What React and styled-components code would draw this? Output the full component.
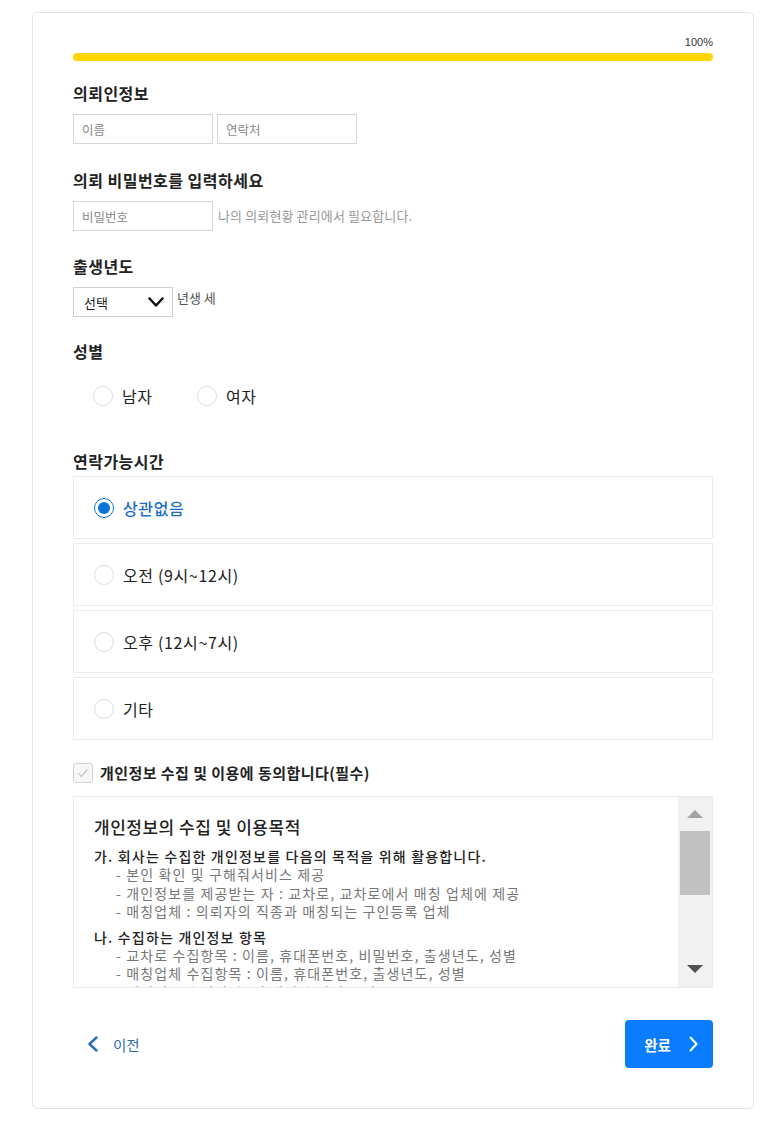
import React from "react";
import styled, { createGlobalStyle } from "styled-components";

const GlobalStyle = createGlobalStyle`
  body {
    margin: 0;
    background: #fff;
    font-family: "Noto Sans CJK KR", "Noto Sans", sans-serif;
    color: #222;
  }
`;

const Card = styled.div`
  box-sizing: border-box;
  width: 722px;
  margin: 12px 0 13px 32px;
  padding: 22px 40px 40px;
  border: 1px solid #e6e6e6;
  border-radius: 5px;
  background: #fff;
`;

const ProgressLabel = styled.div`
  text-align: right;
  font-family: "Liberation Sans", Arial, sans-serif;
  font-size: 11px;
  line-height: 14px;
  color: #333;
`;

const ProgressBar = styled.div`
  height: 8px;
  margin-top: 4px;
  border-radius: 4px;
  background: #ffd500;
`;

const Section = styled.section`
  margin-top: ${(p) => p.$top || 0}px;
`;

const SectionTitle = styled.h3`
  margin: 0 0 ${(p) => (p.$gap !== undefined ? p.$gap : 11)}px;
  font-size: 16px;
  line-height: 20px;
  letter-spacing: 0.03em;
  font-weight: 600;
  color: #222;
`;

const InputRow = styled.div`
  display: flex;
  align-items: ${(p) => p.$align || "center"};
  gap: 4px;
`;

const TextInput = styled.input`
  box-sizing: border-box;
  width: 140px;
  height: 30px;
  padding: 0 8px;
  border: 1px solid #d6d6d6;
  border-radius: 0;
  font-family: inherit;
  font-size: 12.5px;
  color: #222;
  outline: none;

  &::placeholder {
    color: #8a8a8a;
  }
`;

const Helper = styled.span`
  margin-left: 1px;
  font-size: 13px;
  line-height: 16px;
  letter-spacing: 0.01em;
  color: #999;
`;

const SelectBox = styled.div`
  box-sizing: border-box;
  width: 100px;
  height: 30px;
  display: flex;
  align-items: center;
  justify-content: space-between;
  padding: 0 8px 0 10px;
  border: 1px solid #d0d0d0;
  font-size: 13px;
  color: #222;
`;

const SelectSuffix = styled.span`
  padding-top: 3px;
  font-size: 13px;
  line-height: 16px;
  color: #555;
`;

const GenderRow = styled.div`
  display: flex;
  align-items: center;
  padding-left: 20px;
`;

const GenderOption = styled.label`
  width: 104px;
  display: flex;
  align-items: center;
  gap: 9px;
  font-size: 16px;
  line-height: 20px;
  letter-spacing: 0.04em;
  color: #222;
`;

const Radio = styled.span`
  box-sizing: border-box;
  width: 20px;
  height: 20px;
  flex: none;
  display: grid;
  place-items: center;
  border-radius: 50%;
  border: ${(p) => (p.$checked ? "1.5px solid #0a74da" : "1px solid #dcdcdc")};
  background: #fff;

  &::after {
    content: "";
    display: ${(p) => (p.$checked ? "block" : "none")};
    width: 12px;
    height: 12px;
    border-radius: 50%;
    background: #0a74da;
  }
`;

const OptionList = styled.div`
  display: flex;
  flex-direction: column;
  gap: 4px;
`;

const TimeOption = styled.label`
  box-sizing: border-box;
  height: 63px;
  display: flex;
  align-items: center;
  gap: 9px;
  padding-left: 20px;
  border: 1px solid #ebebeb;
  font-size: 16px;
  line-height: 20px;
  letter-spacing: 0.04em;
  font-weight: ${(p) => (p.$checked ? 500 : 400)};
  color: ${(p) => (p.$checked ? "#1a6ec7" : "#222")};
`;

const AgreeRow = styled.label`
  margin-top: 23px;
  display: flex;
  align-items: center;
  gap: 7px;
  font-size: 15px;
  line-height: 20px;
  letter-spacing: 0.03em;
  font-weight: 600;
  color: #222;
`;

const CheckBox = styled.span`
  box-sizing: border-box;
  width: 20px;
  height: 20px;
  display: grid;
  place-items: center;
  border: 1px solid #d4d4d4;
  border-radius: 3px;
  background: #f7f7f7;
`;

const TermsBox = styled.div`
  margin-top: 13px;
  height: 192px;
  display: flex;
  border: 1px solid #ebebeb;
  box-sizing: border-box;
`;

const TermsContent = styled.div`
  flex: 1;
  overflow: hidden;
  padding: 20px 20px 0;
`;

const TermsTitle = styled.h4`
  margin: 0 0 10px;
  font-size: 17px;
  line-height: 20px;
  letter-spacing: 0.03em;
  font-weight: 500;
  color: #222;
`;

const TermsHeading = styled.p`
  margin: ${(p) => (p.$first ? 0 : "7px")} 0 0;
  font-size: 14px;
  line-height: 18px;
  letter-spacing: 0.085em;
  font-weight: 500;
  color: #222;
`;

const TermsList = styled.ul`
  margin: 0;
  padding: 0 0 0 22px;
  list-style: none;

  li {
    font-size: 14px;
    line-height: 18.5px;
    letter-spacing: 0.08em;
    color: #777;
    white-space: nowrap;
  }
`;

const ScrollTrack = styled.div`
  width: 34px;
  flex: none;
  display: flex;
  flex-direction: column;
  align-items: center;
  background: #f1f1f1;
`;

const ScrollArrow = styled.span`
  width: 0;
  height: 0;
  margin: ${(p) => (p.$down ? "auto 0 14px" : "13px 0 0")};
  border-left: 8px solid transparent;
  border-right: 8px solid transparent;
  ${(p) =>
    p.$down
      ? "border-top: 8px solid #505050;"
      : "border-bottom: 8px solid #a3a3a3;"}
`;

const ScrollThumb = styled.div`
  width: 30px;
  height: 64px;
  margin-top: 13px;
  background: #c1c1c1;
`;

const Footer = styled.div`
  margin-top: 32px;
  display: flex;
  align-items: center;
  justify-content: space-between;
`;

const PrevLink = styled.a`
  display: flex;
  align-items: center;
  gap: 15px;
  padding-left: 15px;
  font-size: 14.5px;
  color: #2a6db5;
  text-decoration: none;
  cursor: pointer;
`;

const NextButton = styled.button`
  width: 88px;
  height: 48px;
  display: flex;
  align-items: center;
  justify-content: center;
  gap: 18px;
  padding: 0 0 0 4px;
  border: none;
  border-radius: 4px;
  background: #0a7cff;
  color: #fff;
  font-family: inherit;
  font-size: 14.5px;
  font-weight: 600;
  cursor: pointer;
`;

const Chevron = ({ dir = "down", color = "#111", w = 16, h = 10, stroke = 2.5 }) => {
  const d =
    dir === "down"
      ? `M1.5 1.5 L${w / 2} ${h - 1.5} L${w - 1.5} 1.5`
      : dir === "left"
      ? `M${w - 1.5} 1.5 L1.5 ${h / 2} L${w - 1.5} ${h - 1.5}`
      : `M1.5 1.5 L${w - 1.5} ${h / 2} L1.5 ${h - 1.5}`;
  return (
    <svg width={w} height={h} viewBox={`0 0 ${w} ${h}`}>
      <path d={d} fill="none" stroke={color} strokeWidth={stroke} strokeLinecap="round" strokeLinejoin="round" />
    </svg>
  );
};

const times = [
  { label: "상관없음", checked: true },
  { label: "오전 (9시~12시)" },
  { label: "오후 (12시~7시)" },
  { label: "기타" },
];

export default function App() {
  return (
    <>
      <GlobalStyle />
      <Card>
        <ProgressLabel>100%</ProgressLabel>
        <ProgressBar />

        <Section $top={22}>
          <SectionTitle>의뢰인정보</SectionTitle>
          <InputRow>
            <TextInput placeholder="이름" />
            <TextInput placeholder="연락처" />
          </InputRow>
        </Section>

        <Section $top={26}>
          <SectionTitle>의뢰 비밀번호를 입력하세요</SectionTitle>
          <InputRow>
            <TextInput type="password" placeholder="비밀번호" />
            <Helper>나의 의뢰현황 관리에서 필요합니다.</Helper>
          </InputRow>
        </Section>

        <Section $top={25}>
          <SectionTitle>출생년도</SectionTitle>
          <InputRow $align="flex-start">
            <SelectBox>
              선택
              <Chevron dir="down" />
            </SelectBox>
            <SelectSuffix>년생 세</SelectSuffix>
          </InputRow>
        </Section>

        <Section $top={24}>
          <SectionTitle $gap={25}>성별</SectionTitle>
          <GenderRow>
            <GenderOption>
              <Radio />
              남자
            </GenderOption>
            <GenderOption>
              <Radio />
              여자
            </GenderOption>
          </GenderRow>
        </Section>

        <Section $top={45}>
          <SectionTitle $gap={5}>연락가능시간</SectionTitle>
          <OptionList>
            {times.map((t) => (
              <TimeOption key={t.label} $checked={t.checked}>
                <Radio $checked={t.checked} />
                {t.label}
              </TimeOption>
            ))}
          </OptionList>
        </Section>

        <AgreeRow>
          <CheckBox>
            <svg width="12" height="10" viewBox="0 0 12 10">
              <path d="M1.5 5.5 L4.5 8.5 L10.5 1.5" fill="none" stroke="#c9c9c9" strokeWidth="1.4" />
            </svg>
          </CheckBox>
          개인정보 수집 및 이용에 동의합니다(필수)
        </AgreeRow>

        <TermsBox>
          <TermsContent>
            <TermsTitle>개인정보의 수집 및 이용목적</TermsTitle>
            <TermsHeading $first>가. 회사는 수집한 개인정보를 다음의 목적을 위해 활용합니다.</TermsHeading>
            <TermsList>
              <li>- 본인 확인 및 구해줘서비스 제공</li>
              <li>- 개인정보를 제공받는 자 : 교차로, 교차로에서 매칭 업체에 제공</li>
              <li>- 매칭업체 : 의뢰자의 직종과 매칭되는 구인등록 업체</li>
            </TermsList>
            <TermsHeading>나. 수집하는 개인정보 항목</TermsHeading>
            <TermsList>
              <li>- 교차로 수집항목 : 이름, 휴대폰번호, 비밀번호, 출생년도, 성별</li>
              <li>- 매칭업체 수집항목 : 이름, 휴대폰번호, 출생년도, 성별</li>
              <li>- 개인정보 수집방법 : 홈페이지 서비스 이용</li>
            </TermsList>
          </TermsContent>
          <ScrollTrack>
            <ScrollArrow />
            <ScrollThumb />
            <ScrollArrow $down />
          </ScrollTrack>
        </TermsBox>

        <Footer>
          <PrevLink>
            <Chevron dir="left" color="#2a6db5" w={10} h={16} stroke={2.5} />
            이전
          </PrevLink>
          <NextButton>
            완료
            <Chevron dir="right" color="#fff" w={9} h={16} stroke={2} />
          </NextButton>
        </Footer>
      </Card>
    </>
  );
}
